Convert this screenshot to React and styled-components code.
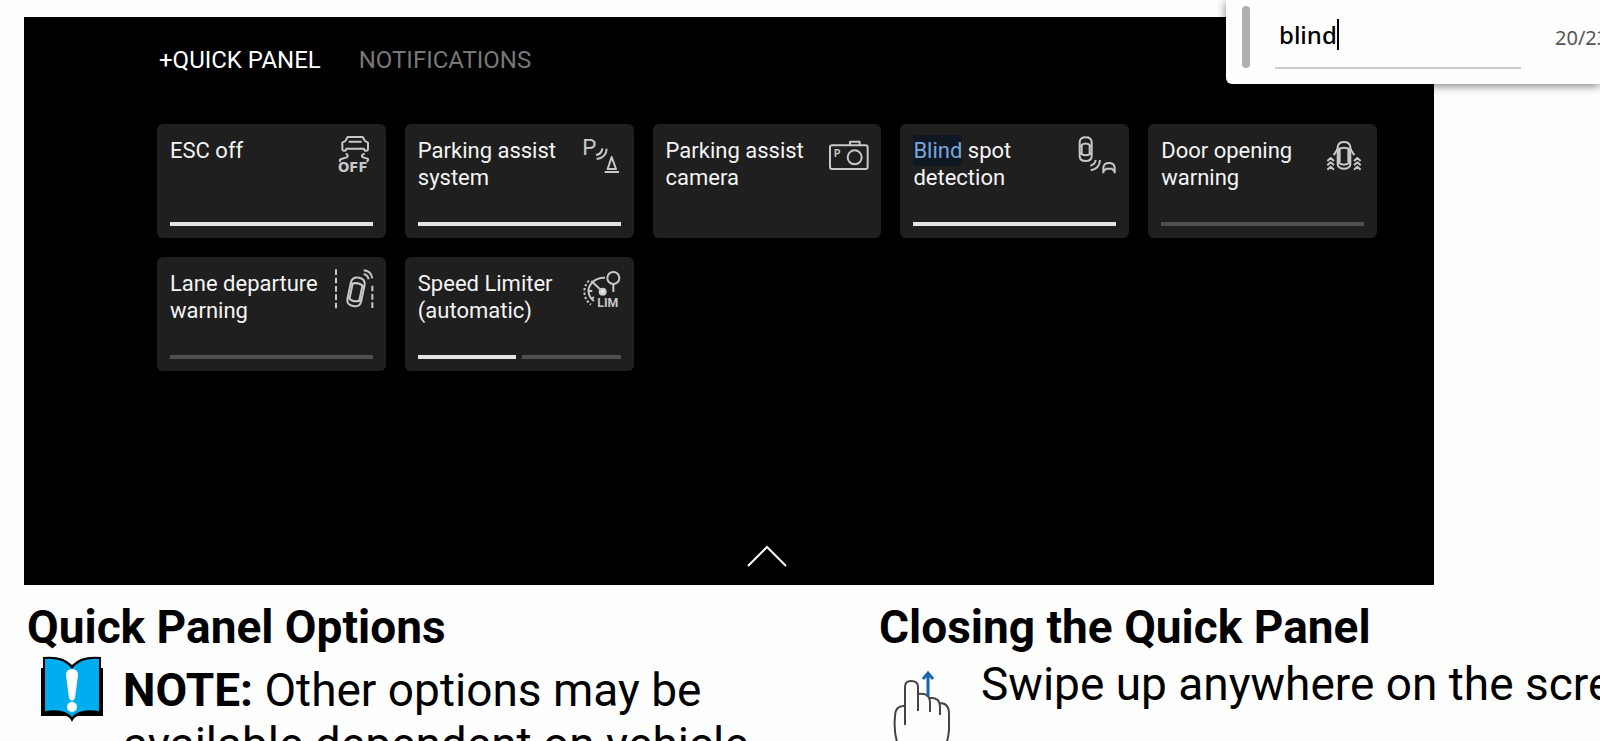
import React, { useState } from 'react';
import styled, { createGlobalStyle } from 'styled-components';

const GlobalStyle = createGlobalStyle`
  * {
    box-sizing: border-box;
  }

  body {
    margin: 0;
    background: #fefefe;
    color: #000;
    font-family: Roboto, 'Liberation Sans', sans-serif;
  }
`;

const Page = styled.div`
  position: relative;
  height: 100vh;
  overflow: hidden;
  padding: 17px 0 0 24px;
`;

const Screen = styled.section`
  display: flex;
  flex-direction: column;
  min-height: 568px;
  margin-right: 166px;
  padding: 27px 57px 17px 133px;
  background: #000;
`;

const Tabs = styled.nav`
  display: flex;
  gap: 38px;
  padding-left: 2px;
  margin-bottom: 48px;
`;

const Tab = styled.button`
  border: 0;
  padding: 0;
  background: none;
  font-family: inherit;
  font-size: 24px;
  line-height: 32px;
  color: ${({ $active }) => ($active ? '#fff' : '#777')};
  cursor: pointer;
`;

const Tiles = styled.div`
  display: grid;
  grid-template-columns: repeat(5, 1fr);
  gap: 19px;
`;

const Tile = styled.button`
  display: flex;
  flex-direction: column;
  justify-content: space-between;
  height: 114px;
  padding: 9px 13px 12px;
  border: 0;
  border-radius: 6px;
  background: #1f1f1f;
  color: #f4f4f4;
  font-family: inherit;
  text-align: left;
  cursor: pointer;
`;

const TileHead = styled.div`
  display: flex;
  justify-content: space-between;
  width: 100%;
`;

const TileTitle = styled.span`
  flex: 1;
  padding-top: 4px;
  font-size: 22px;
  line-height: 27px;
`;

const Match = styled.mark`
  padding: 3px 0;
  border-radius: 3px;
  background: #0e1722;
  color: #7ba5da;
`;

const TileIcon = styled.svg`
  flex: none;
  width: 44px;
  height: 44px;
  margin-right: -3px;
  fill: none;
  stroke: #c8c8c8;
  stroke-width: 6;
  stroke-linejoin: round;

  text {
    fill: #c8c8c8;
    stroke: none;
  }
`;

const Bars = styled.div`
  display: flex;
  gap: 6px;
  width: 100%;
`;

const Bar = styled.span`
  flex: 1;
  height: 4px;
  background: ${({ $on }) => ($on ? '#e4e4e4' : '#505050')};
`;

const CloseButton = styled.button`
  align-self: center;
  margin-top: auto;
  padding: 0;
  border: 0;
  background: none;
  line-height: 0;
  cursor: pointer;
`;

const Columns = styled.div`
  display: grid;
  grid-template-columns: 213fr 181fr;
`;

const Column = styled.article`
  min-width: 0;
  padding: 15px 0 0 3px;
`;

const Heading = styled.h2`
  margin: 0;
  font-size: 46px;
  line-height: 54px;
  font-weight: 700;
  white-space: nowrap;
`;

const Note = styled.div`
  display: flex;
  align-items: flex-start;
  padding-left: 14px;
  gap: 20px;
`;

const NoteText = styled.p`
  margin: 0;
  padding-top: ${({ $top }) => $top}px;
  font-size: 46px;
  line-height: 54px;
  white-space: ${({ $nowrap }) => ($nowrap ? 'nowrap' : 'normal')};
`;

const NoteIcon = styled.svg`
  flex: none;
  overflow: visible;
`;

const SearchBox = styled.form`
  position: absolute;
  top: 0;
  right: 0;
  display: flex;
  align-items: flex-start;
  width: 374px;
  height: 84px;
  padding: 6px 0 0 16px;
  border-radius: 0 0 0 6px;
  background: #fefefe;
  box-shadow: 0 2px 10px rgba(0, 0, 0, 0.5);
`;

const Grip = styled.span`
  flex: none;
  width: 8px;
  height: 62px;
  border-radius: 4px;
  background: #b0b0b0;
`;

const Field = styled.label`
  display: flex;
  align-items: center;
  flex: none;
  width: 246px;
  height: 63px;
  margin: 0 34px 0 25px;
  padding: 0 0 4px 4px;
  border-bottom: 2px solid #cdcdcd;
`;

const SearchInput = styled.input`
  field-sizing: content;
  min-width: 0;
  padding: 0;
  border: 0;
  outline: 0;
  background: none;
  color: #000;
  font-family: 'Noto Sans', sans-serif;
  font-size: 24px;
  font-weight: 500;
  line-height: 32px;
`;

const Caret = styled.span`
  width: 2px;
  height: 31px;
  background: #000;
`;

const Count = styled.output`
  padding-top: 17px;
  font-family: 'Noto Sans', sans-serif;
  font-size: 20px;
  line-height: 30px;
  color: #555;
  white-space: nowrap;
`;

const EscIcon = () => (
  <TileIcon viewBox="36 39 132 132">
    <path d="M76 63 L83 51 H128 L135 63 M76 63 L67 68 V88 Q67 92 71 92 H76 L80 86 H131 L135 92 H140 Q144 92 144 88 V68 L135 63 M86 65 H125" />
    <path d="M77 101 Q88 106 80 112 L64 117 Q56 120 62 125 M134 101 Q120 106 129 112 L142 116 Q148 118 140 125" />
    <text x="54" y="157" fontSize="40" fontWeight="700" fontFamily="DejaVu Sans">OFF</text>
  </TileIcon>
);

const ParkingIcon = () => (
  <TileIcon viewBox="30 39 132 132">
    <text x="37" y="106" fontSize="67" fontFamily="Roboto">P</text>
    <path d="M97 85 Q96 102 78 105 M110 86 Q109 113 80 117" />
    <path d="M125 111 L113 147 H138 Z M104 156 H147" />
  </TileIcon>
);

const CameraIcon = () => (
  <TileIcon viewBox="39 39 132 132">
    <rect x="48" y="76" width="113" height="71" rx="6" />
    <path d="M108 75 V65 H137 V75" />
    <circle cx="122" cy="112" r="21" />
    <text x="60" y="112" fontSize="30" fontWeight="700" fontFamily="Roboto">P</text>
  </TileIcon>
);

const BlindSpotIcon = () => (
  <TileIcon viewBox="33 39 132 132">
    <path d="M47 66 Q48 52 65 52 Q82 52 83 66 V109 Q82 123 65 123 Q48 123 47 109 Z" />
    <path d="M48 79 Q65 62 82 79 M53 76 V104 M77 76 V104 M48 98 Q54 106 65 106 Q76 106 82 98" />
    <path d="M95 120 Q94 133 79 137 M108 120 Q107 146 80 151" />
    <path d="M118 160 V142 Q120 129 135 129 Q150 129 152 142 V160 M124 146 H146 M118 154 L126 147 M152 154 L144 147" />
  </TileIcon>
);

const DoorIcon = () => (
  <TileIcon viewBox="42 39 132 132">
    <path d="M86 88 V80 Q89 66 105 66 Q121 66 124 80 V134 Q121 146 105 146 Q89 146 86 134 V88 Q105 78 124 88 M86 126 Q95 134 105 134 Q115 134 124 126 M92 88 V126 M118 88 V126" />
    <path d="M86 86 L74 106 M124 86 L136 106" />
    <path d="M55 123 L65 114 L75 123 M55 136 L65 127 L75 136 M55 149 L65 140 L75 149 M135 123 L145 114 L155 123 M135 136 L145 127 L155 136 M135 149 L145 140 L155 149" />
  </TileIcon>
);

const LaneIcon = () => (
  <TileIcon viewBox="36 33 132 132">
    <path d="M48 43 V160" strokeDasharray="17 8" />
    <path d="M157 92 V160" strokeDasharray="17 8" />
    <g transform="rotate(12 108 111)">
      <path d="M87 84 Q89 67 108 67 Q127 67 129 84 V138 Q127 154 108 154 Q89 154 87 138 Z" />
      <path d="M88 91 Q108 78 128 91 M93 90 V134 M123 90 V134 M88 132 Q108 146 128 132" />
    </g>
    <path d="M131 57 Q143 59 146 73 M131 46 Q153 48 157 70" />
  </TileIcon>
);

const SpeedIcon = () => (
  <TileIcon viewBox="30 33 132 132">
    <circle cx="130" cy="69" r="18" />
    <path d="M130 87 V111" />
    <path d="M105 68 Q83 67 68 81 Q53 96 56 113 Q58 128 72 138 M57 108 H67 M64 132 L72 126" />
    <path d="M57 77 Q43 91 43 110 Q44 135 63 149" strokeDasharray="7 6" />
    <path d="M64 78 L95 107" />
    <circle cx="98" cy="110" r="9" fill="#e8e8e8" />
    <text x="82" y="156" fontSize="37" fontWeight="700" fontFamily="Roboto">LIM</text>
  </TileIcon>
);

const BookIcon = () => (
  <NoteIcon width="62" height="68" viewBox="0 -2 62 68">
    <path d="M0 12 H2 V1 Q22 -1 31 9 Q40 -1 60 1 V12 H62 V60 H37 Q33 61 31 66 Q29 61 25 60 H0 Z" fill="#000" />
    <path d="M4 3 Q22 1 31 13 Q40 1 58 3 V55 Q38 52 31 61 Q24 52 4 55 Z" fill="#00aeef" />
    <path d="M25 19 Q25 13 31 13 Q37 13 37 19 L34 42 Q33 45 31 45 Q29 45 28 42 Z" fill="#fff" />
    <circle cx="31" cy="51" r="5" fill="#fff" />
  </NoteIcon>
);

const SwipeIcon = () => (
  <NoteIcon width="68" height="90" viewBox="0 -18 68 90" fill="none">
    <path
      d="M12 53 V15 Q12 9 18 9 Q25 9 25 15 V39 M25 22 Q37 20 37 31 V40 M37 26 Q47 25 47 35 V43 M47 31 Q56 31 56 42 V58 Q55 70 50 80 M12 34 Q2 33 2 45 Q0 64 8 80"
      stroke="#444"
      strokeWidth="2"
    />
    <path d="M35 25 V3 M30 7 L35 1 L40 7" stroke="#1e63ad" strokeWidth="3" />
  </NoteIcon>
);

const tiles = [
  { title: 'ESC off', icon: <EscIcon />, bars: [true] },
  { title: 'Parking assist system', icon: <ParkingIcon />, bars: [true] },
  { title: 'Parking assist camera', icon: <CameraIcon />, bars: [] },
  { title: 'Blind spot detection', icon: <BlindSpotIcon />, bars: [true] },
  { title: 'Door opening warning', icon: <DoorIcon />, bars: [false] },
  { title: 'Lane departure warning', icon: <LaneIcon />, bars: [false] },
  { title: 'Speed Limiter (automatic)', icon: <SpeedIcon />, bars: [true, false] }
];

const highlight = (title, query) => {
  if (!query || !title.toLowerCase().startsWith(query.toLowerCase())) {
    return title;
  }
  return (
    <>
      <Match>{title.slice(0, query.length)}</Match>
      {title.slice(query.length)}
    </>
  );
};

const App = () => {
  const [query, setQuery] = useState('blind');

  return (
    <Page>
      <GlobalStyle />
      <Screen>
        <Tabs>
          <Tab $active>+QUICK PANEL</Tab>
          <Tab>NOTIFICATIONS</Tab>
        </Tabs>
        <Tiles>
          {tiles.map((tile) => (
            <Tile key={tile.title}>
              <TileHead>
                <TileTitle>{highlight(tile.title, query)}</TileTitle>
                {tile.icon}
              </TileHead>
              <Bars>
                {tile.bars.map((on, index) => (
                  <Bar key={index} $on={on} />
                ))}
              </Bars>
            </Tile>
          ))}
        </Tiles>
        <CloseButton aria-label="Close">
          <svg width="40" height="24" viewBox="0 0 40 24" fill="none" stroke="#fff" strokeWidth="2">
            <path d="M1 22 L20 3 L39 22" />
          </svg>
        </CloseButton>
      </Screen>

      <Columns>
        <Column>
          <Heading>Quick Panel Options</Heading>
          <Note>
            <BookIcon />
            <NoteText $top={9}>
              <strong>NOTE:</strong> Other options may be
              <br />
              available dependent on vehicle
            </NoteText>
          </Note>
        </Column>
        <Column>
          <Heading>Closing the Quick Panel</Heading>
          <Note>
            <SwipeIcon />
            <NoteText $top={3} $nowrap>Swipe up anywhere on the screen</NoteText>
          </Note>
        </Column>
      </Columns>

      <SearchBox onSubmit={(event) => event.preventDefault()}>
        <Grip />
        <Field>
          <SearchInput
            aria-label="Find"
            value={query}
            onChange={(event) => setQuery(event.target.value)}
          />
          <Caret />
        </Field>
        <Count>20/23</Count>
      </SearchBox>
    </Page>
  );
};

export default App;
